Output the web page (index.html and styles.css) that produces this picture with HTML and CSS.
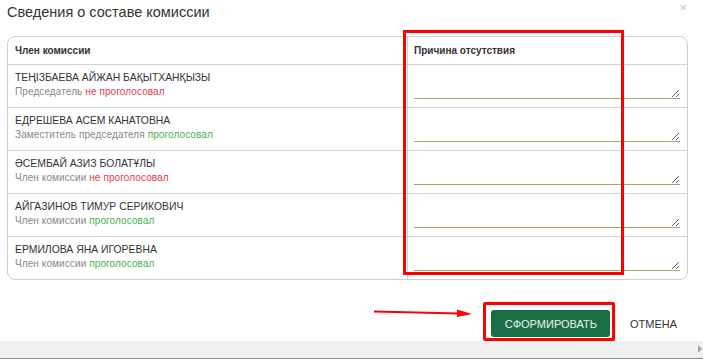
FILE: index.html
```html
<!DOCTYPE html>
<html>
<head>
  <meta charset="UTF-8" />
  <title>Сведения о составе комиссии</title>
  <link rel="stylesheet" href="styles.css">
</head>
<body>
  <div class="dialog">
    <div class="dialog-head">
      <h2>Сведения о составе комиссии</h2>
      <span class="close">&times;</span>
    </div>

    <!-- Members table -->
    <div class="members">
      <div class="row head">
        <div class="cell">Член комиссии</div>
        <div class="cell reason">Причина отсутствия</div>
      </div>
      <div class="row">
        <div class="cell">
          <p class="name">ТЕҢІЗБАЕВА АЙЖАН БАҚЫТХАНҚЫЗЫ</p>
          <p class="role">Председатель <span class="no">не проголосовал</span></p>
        </div>
        <div class="cell reason"><textarea></textarea></div>
      </div>
      <div class="row">
        <div class="cell">
          <p class="name">ЕДРЕШЕВА АСЕМ КАНАТОВНА</p>
          <p class="role">Заместитель председателя <span class="yes">проголосовал</span></p>
        </div>
        <div class="cell reason"><textarea></textarea></div>
      </div>
      <div class="row">
        <div class="cell">
          <p class="name">ӘСЕМБАЙ АЗИЗ БОЛАТҰЛЫ</p>
          <p class="role">Член комиссии <span class="no">не проголосовал</span></p>
        </div>
        <div class="cell reason"><textarea></textarea></div>
      </div>
      <div class="row">
        <div class="cell">
          <p class="name">АЙГАЗИНОВ ТИМУР СЕРИКОВИЧ</p>
          <p class="role">Член комиссии <span class="yes">проголосовал</span></p>
        </div>
        <div class="cell reason"><textarea></textarea></div>
      </div>
      <div class="row">
        <div class="cell">
          <p class="name">ЕРМИЛОВА ЯНА ИГОРЕВНА</p>
          <p class="role">Член комиссии <span class="yes">проголосовал</span></p>
        </div>
        <div class="cell reason"><textarea></textarea></div>
      </div>
    </div>

    <div class="dialog-foot">
      <button class="btn-main">СФОРМИРОВАТЬ</button>
      <button class="btn-cancel">ОТМЕНА</button>
    </div>

    <!-- red annotations -->
    <div class="mark mark-col"></div>
    <div class="mark mark-btn"></div>
    <svg class="arrow" width="104" height="12" viewBox="0 0 104 12">
      <path d="M1 4.5 L86 6.5" stroke="#ff0000" stroke-width="2.2" fill="none"/>
      <path d="M84 2.5 L99 7 L84 10 Z" fill="#ff0000"/>
    </svg>
  </div>

  <div class="hscroll"><span class="hscroll-arrow"></span></div>
</body>
</html>
```

FILE: styles.css
```css
body {
  margin: 0;
  font-family: Arial, 'Liberation Sans', sans-serif;
  color: #333;
  background: #fff;
}

.dialog {
  position: relative;
  height: 341px;
  padding: 0 15px 0 7px;
  box-sizing: border-box;
}

.dialog-head {
  display: flex;
  justify-content: space-between;
  align-items: flex-start;
  height: 36px;
}

.dialog-head h2 {
  margin: 3px 0 0;
  font-size: 14.5px;
  font-weight: normal;
  line-height: 18px;
  color: #333;
}

.close {
  margin: 1px 1px 0 0;
  font-size: 13px;
  line-height: 14px;
  color: #c8c8c8;
}

.members {
  border: 1px solid #cfcfcf;
  border-radius: 8px;
  overflow: hidden;
}

.row {
  display: flex;
  height: 43px;
  border-top: 1px solid #d4d4d4;
  box-sizing: border-box;
}

.row.head {
  height: 27px;
  border-top: none;
  align-items: center;
  font-size: 10px;
  font-weight: bold;
}

.cell {
  width: 399px;
  padding: 0 7px;
  box-sizing: border-box;
}

.cell.reason {
  flex: 1;
  border-left: 1px solid #d4d4d4;
  padding: 0 7px 0 6px;
}

.row.head .cell {
  line-height: 27px;
}

.name {
  margin: 6px 0 0;
  font-size: 10.4px;
  line-height: 14px;
  color: #333;
}

.role {
  margin: 0;
  font-size: 10px;
  letter-spacing: 0.1px;
  line-height: 13px;
  color: #888;
}

.no {
  color: #f0384a;
}

.yes {
  color: #4caf50;
}

textarea {
  display: block;
  width: 100%;
  height: 28px;
  margin-top: 6px;
  padding: 0;
  border: none;
  border-bottom: 1px solid #b3a36b;
  outline: none;
  resize: vertical;
  box-sizing: border-box;
  font-family: inherit;
}

.dialog-foot {
  display: flex;
  justify-content: flex-end;
  align-items: center;
  gap: 12px;
  padding: 30px 3px 0 0;
}

.btn-main {
  height: 27px;
  padding: 0 13px 0 14px;
  background-color: #1a6f46;
  color: #f1f1f1;
  border: none;
  border-radius: 3px;
  font-family: inherit;
  font-size: 11px;
}

.btn-cancel {
  height: 27px;
  padding: 0 8px;
  background: none;
  border: none;
  color: #333;
  font-family: inherit;
  font-size: 11px;
}

.mark {
  position: absolute;
  border: 3px solid #ff0000;
  box-sizing: border-box;
}

.mark-col {
  left: 403px;
  top: 30px;
  width: 221px;
  height: 245px;
}

.mark-btn {
  left: 483px;
  top: 302px;
  width: 132px;
  height: 39px;
  border-radius: 2px;
}

.arrow {
  position: absolute;
  left: 373px;
  top: 307px;
}

.hscroll {
  position: relative;
  height: 18px;
  background: #f0f0f0;
  border-bottom: 1px solid #8a8a8a;
  box-sizing: border-box;
}

.hscroll-arrow {
  position: absolute;
  right: 1px;
  top: 4px;
  border-left: 4px solid #a3a3a3;
  border-top: 4px solid transparent;
  border-bottom: 4px solid transparent;
}
```
